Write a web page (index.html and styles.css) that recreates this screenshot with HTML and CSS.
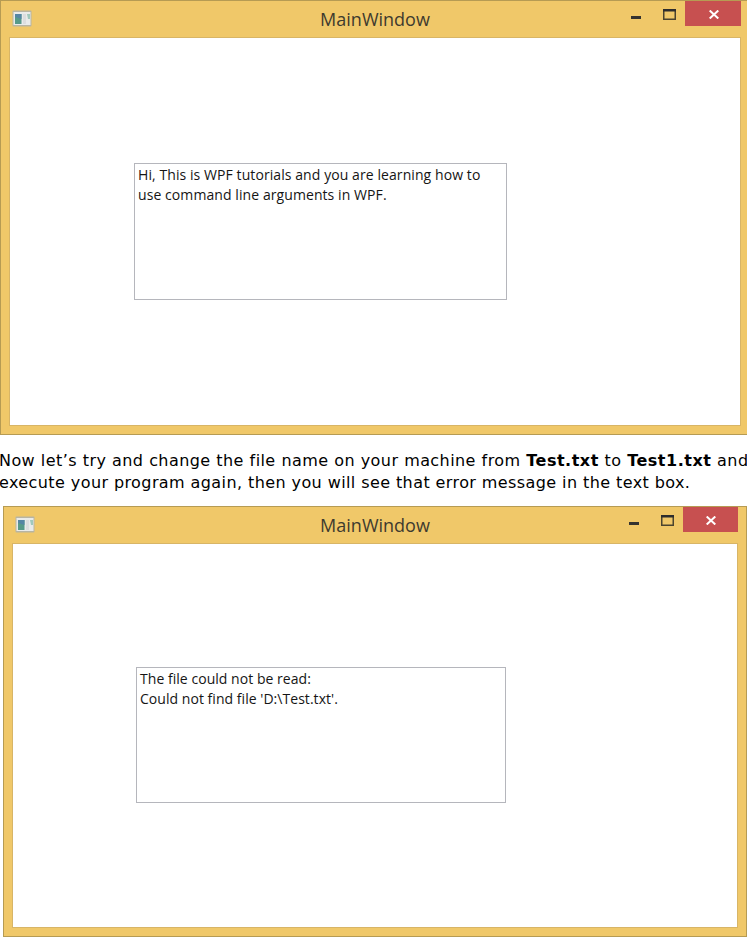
FILE: index.html
```
<!DOCTYPE html>
<html lang="en">
<head>
<meta charset="utf-8">
<title>WPF command line arguments</title>
<link rel="stylesheet" href="styles.css">
</head>
<body>
<main>
<section class="window first">
  <header class="bar">
    <svg class="app" width="20" height="17" viewBox="0 0 20 17"><rect x=".5" y=".5" width="19" height="16" rx="1" fill="#b8b5a3"/><rect x="1.5" y="2" width="17" height="13" fill="#e9ebea"/><rect x="3" y="4" width="6.5" height="10" fill="#579a89"/><path d="M3 4h6.5v5L3 7z" fill="#5586a4"/><path d="M11 4h3v10h-3z" fill="#dcdddf"/><path d="M15 4h3v5h-2z" fill="#a0c9bd"/></svg>
    <h1>MainWindow</h1>
    <div class="controls">
      <svg class="min" width="10" height="3"><rect width="10" height="3" fill="#343330"/></svg>
      <svg class="max" width="13" height="11"><path d="M.75 1v9.25h11.5V1" fill="none" stroke="#4b442f" stroke-width="1.5"/><path d="M0 0h13v2.5H0z" fill="#2d2d2d"/></svg>
      <span class="close"><svg width="10" height="9" viewBox="0 0 10 9"><path d="M.7.5 9.3 8.5M9.3.5.7 8.5" stroke="#fff" stroke-width="2"/></svg></span>
    </div>
  </header>
  <div class="client"><div class="textbox"><p class="a1">Hi, This is WPF tutorials and you are learning how to</p><p class="a2">use command line arguments in WPF.</p></div></div>
</section>
<div class="prose"><p class="p1">Now let’s try and change the file name on your machine from <b>Test.txt</b> to <b>Test1.txt</b> and</p><p class="p2">execute your program again, then you will see that error message in the text box.</p></div>
<section class="window second">
  <header class="bar">
    <svg class="app" width="20" height="17" viewBox="0 0 20 17"><rect x=".5" y=".5" width="19" height="16" rx="1" fill="#b8b5a3"/><rect x="1.5" y="2" width="17" height="13" fill="#e9ebea"/><rect x="3" y="4" width="6.5" height="10" fill="#579a89"/><path d="M3 4h6.5v5L3 7z" fill="#5586a4"/><path d="M11 4h3v10h-3z" fill="#dcdddf"/><path d="M15 4h3v5h-2z" fill="#a0c9bd"/></svg>
    <h1>MainWindow</h1>
    <div class="controls">
      <svg class="min" width="10" height="3"><rect width="10" height="3" fill="#343330"/></svg>
      <svg class="max" width="13" height="11"><path d="M.75 1v9.25h11.5V1" fill="none" stroke="#4b442f" stroke-width="1.5"/><path d="M0 0h13v2.5H0z" fill="#2d2d2d"/></svg>
      <span class="close"><svg width="10" height="9" viewBox="0 0 10 9"><path d="M.7.5 9.3 8.5M9.3.5.7 8.5" stroke="#fff" stroke-width="2"/></svg></span>
    </div>
  </header>
  <div class="client"><div class="textbox"><p class="b1">The file could not be read:</p><p class="b2">Could not find file 'D:\Test.txt'.</p></div></div>
</section>
</main>
</body>
</html>
```
FILE: styles.css
```
* { box-sizing: border-box; }
html, body { margin: 0; background: #fff; }
body { overflow: hidden; }
main { width: 747px; height: 937px; overflow: hidden; }
p, h1 { margin: 0; white-space: nowrap; }
svg { display: block; flex: none; }
.window { background: #f0c869; border: 1px solid #b69b53; }
.first { width: 749px; height: 435px; padding: 0 7px 8px 8px; }
.second { width: 744px; height: 431px; margin-left: 3px; padding: 0 8px 8px; }
.bar { display: grid; grid-template-columns: 115px 1fr 115px; height: 36px; }
.app { margin: 9px 0 0 3px; }
h1 { font: 400 18px/37px "Open Sans", "Noto Sans", sans-serif; color: #3e3b2f; text-align: center; }
.controls { display: flex; align-items: flex-start; justify-content: flex-end; }
.min { margin: 15px 22px 0 0; }
.max { margin: 8px 9px 0 0; }
.close { width: 56px; height: 25px; padding: 1px 0 0 1px; background: #c75050; display: flex; align-items: center; justify-content: center; }
.client { background: #fff; border: 1px solid #d8b566; }
.first .client { width: 732px; height: 389px; padding: 125px 0 0 124px; }
.second .client { width: 726px; height: 385px; padding: 123px 0 0 123px; }
.first .bar { width: 732px; }
.second .bar { width: 726px; }
.second .close { width: 55px; }
.textbox { border: 1px solid #b5b6bc; color: #151515; font: 14px/20px "Open Sans", "Noto Sans", sans-serif; }
.first .textbox { width: 373px; height: 137px; padding: 1px 3px; }
.second .textbox { width: 370px; height: 136px; padding: 1px 3px; }
.a1, .a2 { letter-spacing: .08px; }
.b1, .b2 { letter-spacing: .04px; }
.prose { height: 71px; padding-top: 15px; font: 16px/22px "DejaVu Sans", Verdana, sans-serif; color: #000; }
.prose p { margin-left: -1px; }
.p1 { letter-spacing: .42px; word-spacing: .25px; }
.p1 b { letter-spacing: .5px; }
.p2 { letter-spacing: .41px; }
```
